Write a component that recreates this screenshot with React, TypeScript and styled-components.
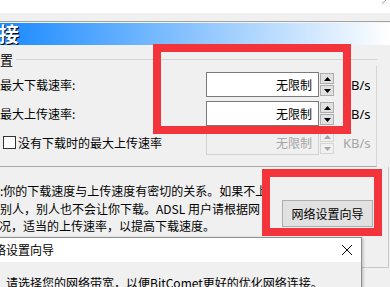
import React from "react";
import styled, { createGlobalStyle } from "styled-components";

const GlobalStyle = createGlobalStyle`
  html, body { margin: 0; padding: 0; }
  body {
    width: 390px;
    height: 287px;
    overflow: hidden;
    background: #f0f0f0;
    color: #000;
    font-family: "Noto Sans CJK SC", "Noto Sans", sans-serif;
    font-size: 12px;
  }
`;

const Screen = styled.div`
  position: relative;
  width: 390px;
  height: 287px;
  overflow: hidden;
  background: #f0f0f0;
`;

const TopStrip = styled.div`
  height: 13px;
  background: #ffffff;
  display: flex;
  justify-content: flex-end;
  align-items: flex-start;
  padding-right: 3px;
`;

const Band = styled.div`
  height: 8px;
  background: #f0f0f0;
  border-bottom: 1px solid #a3a3a3;
`;

const BandShine = styled.div`
  height: 1px;
  background: #f4f4f4;
`;

const Header = styled.div`
  height: 22px;
  background: linear-gradient(90deg, #1a8aff 0%, #ffffff 100%);
  display: flex;
  align-items: center;
`;

const HeaderTitle = styled.span`
  margin-left: -1px;
  font-size: 20px;
  line-height: 22px;
  font-weight: bold;
  color: #ffffff;
  text-shadow: 1px 1px 0 #000000;
`;

const GroupBox = styled.section`
  margin-top: 8px;
  width: 377px;
`;

const GroupHead = styled.div`
  display: flex;
  align-items: center;
  height: 13px;
`;

const Legend = styled.span`
  font-size: 13px;
  line-height: 13px;
`;

const Rule = styled.div`
  flex: 1;
  height: 1px;
  margin-left: 3px;
  background: #d5d5d5;
`;

const GroupBody = styled.div`
  display: flex;
  flex-direction: column;
  gap: 4px;
  padding: 6px 0 11px 0;
  border-right: 1px solid #d5d5d5;
  border-bottom: 1px solid #a8a8a8;
`;

const Row = styled.div`
  display: flex;
  align-items: center;
  height: 25px;
`;

const Label = styled.label`
  width: 206px;
  flex: none;
  display: flex;
  align-items: center;
  white-space: nowrap;
  line-height: 16px;
`;

const CheckBox = styled.span`
  box-sizing: border-box;
  width: 13px;
  height: 13px;
  margin-left: 3px;
  margin-right: 2px;
  border: 1px solid #333333;
  background: #ffffff;
  flex: none;
`;

const Field = styled.div<{ $disabled?: boolean }>`
  box-sizing: border-box;
  width: 113px;
  height: 25px;
  flex: none;
  padding-right: 6px;
  border: 1px solid ${(p) => (p.$disabled ? "#d3d3d3" : "#7a7a7a")};
  background: ${(p) => (p.$disabled ? "#f0f0f0" : "#ffffff")};
  color: ${(p) => (p.$disabled ? "#a6a6a6" : "#000000")};
  text-align: right;
  line-height: 23px;
`;

const Spinner = styled.div`
  display: flex;
  flex-direction: column;
  gap: 1px;
  margin-left: 1px;
  height: 23px;
`;

const SpinBtn = styled.div<{ $disabled?: boolean }>`
  box-sizing: border-box;
  width: 14px;
  height: 11px;
  display: flex;
  align-items: center;
  justify-content: center;
  border: 1px solid ${(p) => (p.$disabled ? "#d6d6d6" : "#adadad")};
  background: ${(p) => (p.$disabled ? "#f0f0f0" : "#e1e1e1")};
  color: ${(p) => (p.$disabled ? "#a6a6a6" : "#000000")};
`;

const Unit = styled.span<{ $disabled?: boolean }>`
  margin-left: 9px;
  font-family: "Noto Sans", sans-serif;
  font-size: 13px;
  color: ${(p) => (p.$disabled ? "#a6a6a6" : "#000000")};
`;

const InfoSection = styled.section`
  display: flex;
  align-items: flex-start;
  width: 388px;
  height: 100px;
  border-right: 1px solid #c9c9c9;
  border-bottom: 1px solid #c9c9c9;
`;

const InfoText = styled.div`
  width: 266px;
  flex: none;
  overflow: hidden;
  padding-top: 15px;
  white-space: nowrap;
  line-height: 17.5px;
`;

const InfoLine = styled.div<{ $shift?: number }>`
  margin-left: ${(p) => p.$shift ?? 0}px;
`;

const WizardButton = styled.button`
  box-sizing: border-box;
  margin-left: 16px;
  margin-top: 33px;
  width: 91px;
  height: 27px;
  padding: 0;
  border: 1px solid #adadad;
  background: #e1e1e1;
  font-family: "Noto Sans CJK SC", sans-serif;
  font-size: 12px;
  color: #000;
`;

const Dialog = styled.div`
  position: absolute;
  left: -30px;
  top: 237px;
  width: 392px;
  height: 80px;
  box-sizing: border-box;
  border: 1px solid #8f8f8f;
  background: #f0f0f0;
  box-shadow: 1px 1px 3px rgba(0, 0, 0, 0.25);
`;

const DialogBar = styled.div`
  height: 24px;
  display: flex;
  align-items: center;
  background: #ffffff;
`;

const DialogTitle = styled.span`
  flex: 1;
  padding-left: 11px;
  line-height: 20px;
  white-space: nowrap;
`;

const CloseBtn = styled.span`
  width: 10px;
  height: 10px;
  margin-right: 9px;
  display: flex;
`;

const DialogBody = styled.div`
  padding: 12px 0 0 35px;
  line-height: 17px;
  white-space: nowrap;
`;

const Annotation = styled.div`
  position: absolute;
  box-sizing: border-box;
  border: 8px solid #f4343b;
  pointer-events: none;
`;

const Up = () => (
  <svg width="7" height="4" viewBox="0 0 7 4">
    <path d="M0 4 L3.5 0 L7 4 Z" fill="currentColor" />
  </svg>
);
const Down = () => (
  <svg width="7" height="4" viewBox="0 0 7 4">
    <path d="M0 0 L3.5 4 L7 0 Z" fill="currentColor" />
  </svg>
);

function SpeedRow({ label, disabled, check }: { label: string; disabled?: boolean; check?: boolean }) {
  return (
    <Row>
      <Label>
        {check && <CheckBox />}
        {label}
      </Label>
      <Field $disabled={disabled}>无限制</Field>
      <Spinner>
        <SpinBtn $disabled={disabled}><Up /></SpinBtn>
        <SpinBtn $disabled={disabled}><Down /></SpinBtn>
      </Spinner>
      <Unit $disabled={disabled}>KB/s</Unit>
    </Row>
  );
}

export default function App() {
  return (
    <>
      <GlobalStyle />
      <Screen>
        <TopStrip>
          <svg width="6" height="4" viewBox="0 0 6 4">
            <path d="M1 3.5 L5 0" stroke="#9a9a9a" strokeWidth="1" />
          </svg>
        </TopStrip>
        <Band />
        <BandShine />
        <Header>
          <HeaderTitle>接</HeaderTitle>
        </Header>
        <GroupBox>
          <GroupHead>
            <Legend>置</Legend>
            <Rule />
          </GroupHead>
          <GroupBody>
            <SpeedRow label="最大下载速率:" />
            <SpeedRow label="最大上传速率:" />
            <SpeedRow label="没有下载时的最大上传速率" check disabled />
          </GroupBody>
        </GroupBox>
        <InfoSection>
          <InfoText>
            <InfoLine>:你的下载速度与上传速度有密切的关系。如果不上传</InfoLine>
            <InfoLine>别人，别人也不会让你下载。ADSL 用户请根据网</InfoLine>
            <InfoLine $shift={-1}>况，适当的上传速率，以提高下载速度。</InfoLine>
          </InfoText>
          <WizardButton>网络设置向导</WizardButton>
        </InfoSection>
        <Dialog>
          <DialogBar>
            <DialogTitle>网络设置向导</DialogTitle>
            <CloseBtn>
              <svg width="10" height="10" viewBox="0 0 10 10">
                <path d="M0 0 L10 10 M10 0 L0 10" stroke="#000" strokeWidth="1" />
              </svg>
            </CloseBtn>
          </DialogBar>
          <DialogBody>请选择您的网络带宽，以便BitComet更好的优化网络连接。</DialogBody>
        </Dialog>
        <Annotation style={{ left: 153, top: 44, width: 198, height: 90 }} />
        <Annotation style={{ left: 262, top: 169, width: 120, height: 67 }} />
      </Screen>
    </>
  );
}
